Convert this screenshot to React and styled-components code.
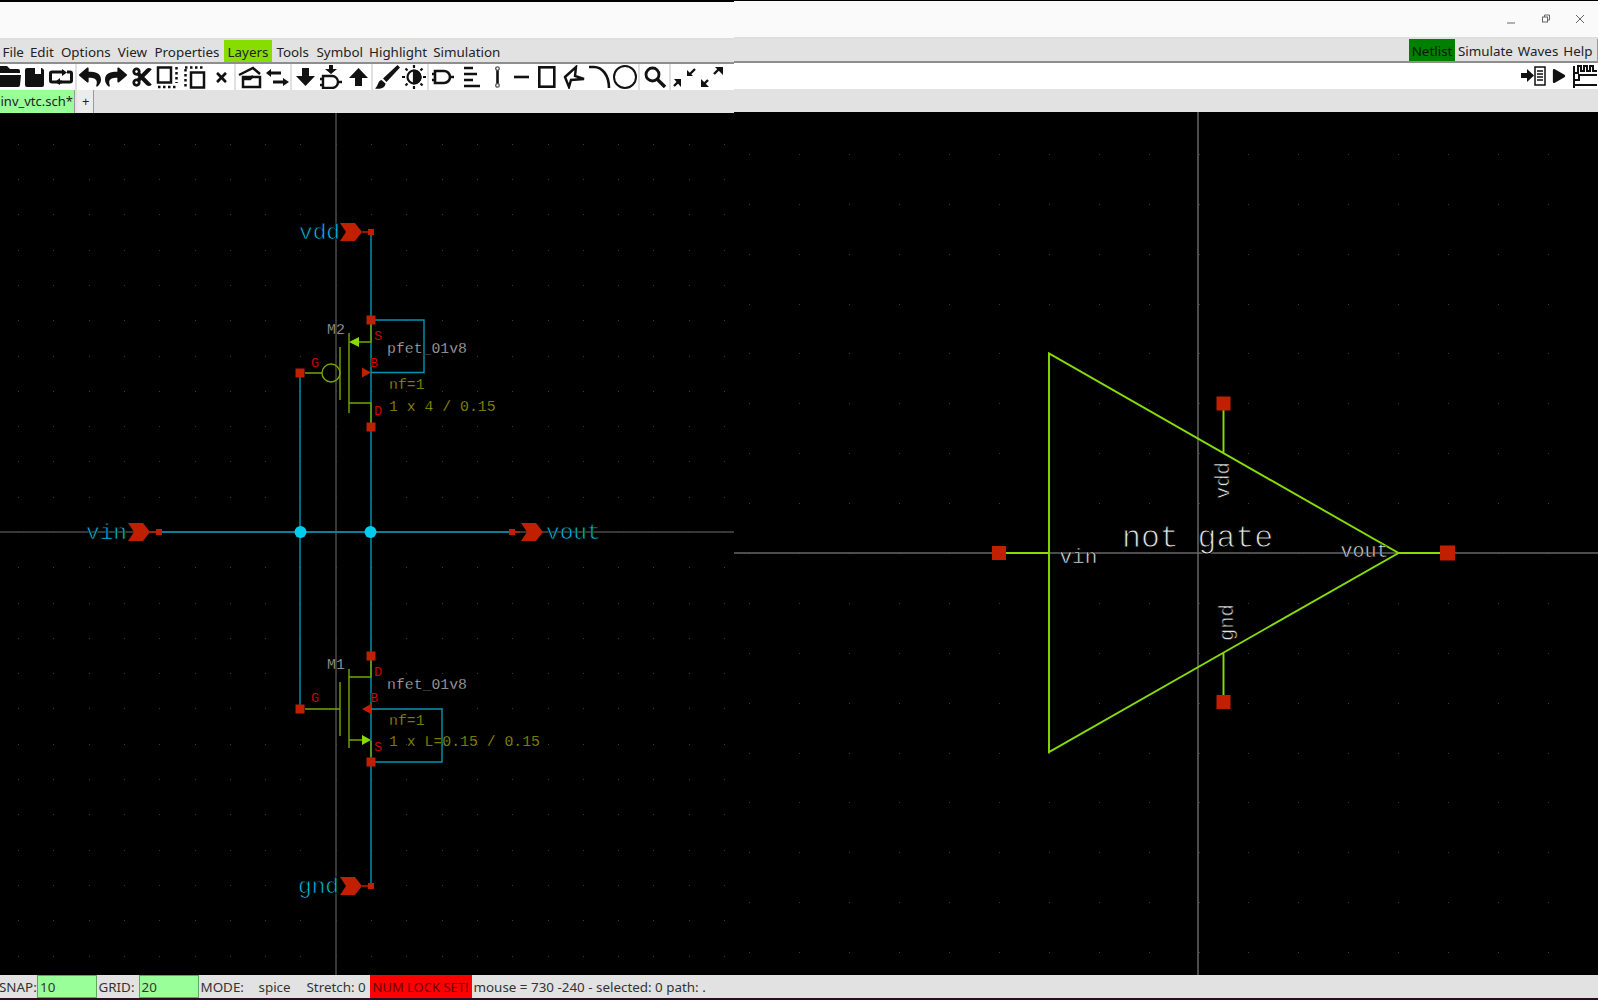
import React from 'react';
import styled, { createGlobalStyle } from 'styled-components';
import { FaReply, FaShare, FaCut, FaTimes, FaPlay } from 'react-icons/fa';

const Global = createGlobalStyle`
  html, body { margin: 0; padding: 0; background: #000; overflow: hidden; }
  #root { width: 1598px; height: 1000px; }
`;

const Screen = styled.div`
  width: 1598px; height: 1000px; display: flex; flex-direction: column;
  font-family: "Noto Sans", sans-serif; font-size: 13.4px; color: #222;
  border-bottom: 2px solid #2c0a22; box-sizing: border-box;
`;
const Panes = styled.div`display: flex; height: 975px;`;
const Pane = styled.section`
  width: ${p => p.$w}px; height: 975px; display: flex; flex-direction: column;
  border-top: ${p => p.$top}px solid #000; box-sizing: border-box; overflow: hidden;
`;
const TitleBar = styled.header`
  height: 36px; flex: none; background: #fafafa; border-bottom: 2px solid #dedede;
  display: flex; justify-content: flex-end; align-items: center; gap: 20px; padding-right: 11px;
`;
const WinButton = styled.svg`width: 14px; height: 14px; fill: none; stroke: #666; stroke-width: 1;`;
const MenuBar = styled.nav`
  height: 22px; flex: none; background: #e2e2e2; border-bottom: 2px solid #8e8e8e;
  display: flex; justify-content: ${p => p.$right ? 'flex-end' : 'flex-start'};
  padding-right: ${p => p.$right ? 2 : 0}px;
  border-right: ${p => p.$right ? '1px solid #9a9a9a' : '0'};
`;
const MenuItem = styled.span`
  display: flex; align-items: center; height: 22px; box-sizing: border-box; padding: 1px ${p => p.$pad ?? 3.5}px 0;
  background: ${p => p.$bg || 'transparent'}; color: ${p => p.$fg || '#222'}; white-space: nowrap;
`;
const ToolBar = styled.div`
  height: 26px; flex: none; background: #fff; display: flex; align-items: center;
  justify-content: ${p => p.$right ? 'flex-end' : 'flex-start'};
  overflow: hidden;
`;
const Tool = styled.span`
  width: ${p => p.$w}px; height: 26px; flex: none; display: flex; align-items: center; justify-content: center;
  margin-left: ${p => p.$ml || 0}px; color: #111;
  svg { display: block; flex: none; }
`;
const ToolSep = styled.span`width: 2px; height: 26px; flex: none; background: #e0e0e0;`;
const TabBar = styled.div`height: 23px; flex: none; background: #e2e2e2; display: flex;`;
const Tab = styled.span`
  height: 23px; box-sizing: border-box; display: flex; align-items: center; white-space: nowrap; overflow: hidden;
  width: ${p => p.$w}px; background: ${p => p.$active ? '#99ff99' : '#ececec'};
  border-right: 1px solid #9a9a9a; padding: 0 0 2px ${p => p.$pl}px; margin-left: ${p => p.$ml || 0}px;
  font-size: 13px;
`;
const Canvas = styled.svg`display: block; flex: none; background: #000;`;
const StatusBar = styled.footer`
  height: 23px; flex: none; background: #e2e2e2; display: flex; align-items: stretch; overflow: hidden; color: #333;
`;
const StatusText = styled.span`display: flex; align-items: center; white-space: nowrap; width: ${p => p.$w ? p.$w + 'px' : 'auto'}; margin-left: ${p => p.$ml || 0}px; flex: none;`;
const StatusInput = styled.span`
  width: 60px; flex: none; box-sizing: border-box; background: #99ff99; border: 1px solid #5aa85a;
  display: flex; align-items: center; padding-left: 2px;
`;
const NumLock = styled.span`
  width: 102px; flex: none; background: #ff0000; color: #6a0000; font-size: 13px; display: flex; align-items: center; justify-content: center; white-space: nowrap;
`;

const Label = styled.text`
  font-family: "Liberation Mono", monospace;
  font-size: ${p => p.$size}px;
  fill: ${p => p.$c};
  stroke: #000; stroke-width: ${p => p.$thin ?? 0.3}px; paint-order: fill stroke;
`;

const AXIS = '#4a4a4a', WIRE = '#0096b4', DIM = '#74a600', GREEN = '#88dd00', RED = '#c02000', DOT = '#3c3c3c', JUNC = '#00ccee', GRAY = '#bcbcbc', OLIVE = '#a0a000', PINT = '#dc0000', SYM = '#e4e4e4', NET = '#00c8f0';

const range = (start, end, step) => { const a = []; for (let v = start; v <= end; v += step) a.push(v); return a; };

const Grid = ({ x0, x1, y0, y1, ox, oy, step }) => {
  const xs = range(ox - Math.ceil((ox - x0) / step) * step, x1, step);
  const ys = range(oy - Math.ceil((oy - y0) / step) * step, y1, step);
  return <g fill={DOT}>{ys.flatMap(y => xs.map(x => <rect key={x + '_' + y} x={Math.round(x)} y={Math.round(y)} width="1" height="1" />))}</g>;
};

const Pin = ({ x, y, s = 9 }) => <rect x={x - s / 2} y={y - s / 2} width={s} height={s} fill={RED} />;
const Chevron = ({ x, y }) => <polygon points={`${x},${y - 9} ${x + 15},${y - 9} ${x + 22},${y} ${x + 15},${y + 9} ${x},${y + 9} ${x + 6},${y}`} fill={RED} />;

const Left = () => (
  <Canvas width="734" height="862" viewBox="0 113 734 862">
    <Grid x0={0} x1={734} y0={113} y1={975} ox={335.7} oy={532} step={35.3} />
    <g stroke={AXIS} strokeWidth="1.5">
      <line x1="336" y1="113" x2="336" y2="975" />
      <line x1="0" y1="532" x2="734" y2="532" />
    </g>
    <g fill="none" stroke={WIRE} strokeWidth="1.4">
      <path d="M371 232V426M371 426V886M300 373V709M159 532H512M371 320H424V372.5H371M371 709H442V762H371" />
    </g>
    <g fill="none" stroke={DIM} strokeWidth="1.4">
      <path d="M349 333V413M340 347V400M349 403H371V426M371 320V342H356M305 373H322M349 669V748M340 682V736M349 677H371V656M305 709H340M349 740H362M371 741V757" />
      <circle cx="331" cy="373" r="9" />
    </g>
    <polygon points="349,342 359,337 359,347" fill={GREEN} />
    <polygon points="371,740 362,735 362,745" fill={GREEN} />
    <polygon points="371,372.5 362,367.5 362,377.5" fill={RED} />
    <polygon points="362,709 371,704 371,714" fill={RED} />
    <g stroke={RED} strokeWidth="1.3"><path d="M362 232H371M362 886H371M150 532H159M512 532H520" /></g>
    <Pin x={371} y={232} s={6} /><Pin x={371} y={886} s={6} /><Pin x={159} y={532} s={6} /><Pin x={512} y={532} s={6} />
    <Pin x={371} y={320} /><Pin x={371} y={427} /><Pin x={300} y={373} /><Pin x={371} y={656} /><Pin x={300} y={709} /><Pin x={371} y={762} />
    <Chevron x={340} y={232} /><Chevron x={340} y={886} /><Chevron x={128} y={532} /><Chevron x={521} y={532} />
    <circle cx="300.5" cy="532" r="6" fill={JUNC} /><circle cx="370.5" cy="532" r="6" fill={JUNC} />

    <Label x="299" y="239" $size="22.8" $c={NET} $thin="0.75">vdd</Label>
    <Label x="298" y="893" $size="22.8" $c={NET} $thin="0.75">gnd</Label>
    <Label x="86" y="539" $size="22.8" $c={NET} $thin="0.75">vin</Label>
    <Label x="546" y="539" $size="22.8" $c={NET} $thin="0.75">vout</Label>

    <Label x="327" y="334" $size="14.8" $c={GRAY}>M2</Label>
    <Label x="387" y="353" $size="14.8" $c={GRAY}>pfet_01v8</Label>
    <Label x="389" y="389" $size="14.8" $c={OLIVE}>nf=1</Label>
    <Label x="389" y="410.5" $size="14.8" $c={OLIVE}>1 x 4 / 0.15</Label>
    <Label x="327" y="669" $size="14.8" $c={GRAY}>M1</Label>
    <Label x="387" y="689" $size="14.8" $c={GRAY}>nfet_01v8</Label>
    <Label x="389" y="725" $size="14.8" $c={OLIVE}>nf=1</Label>
    <Label x="389" y="746" $size="14.8" $c={OLIVE}>1 x L=0.15 / 0.15</Label>

    <Label x="374" y="340" $size="13.5" $c={PINT} $thin="0.1">S</Label>
    <Label x="311" y="367" $size="13.5" $c={PINT} $thin="0.1">G</Label>
    <Label x="370" y="367" $size="13.5" $c={PINT} $thin="0.1">B</Label>
    <Label x="374" y="415" $size="13.5" $c={PINT} $thin="0.1">D</Label>
    <Label x="374" y="676" $size="13.5" $c={PINT} $thin="0.1">D</Label>
    <Label x="311" y="702" $size="13.5" $c={PINT} $thin="0.1">G</Label>
    <Label x="370" y="702" $size="13.5" $c={PINT} $thin="0.1">B</Label>
    <Label x="374" y="751" $size="13.5" $c={PINT} $thin="0.1">S</Label>
  </Canvas>
);

const Right = () => (
  <Canvas width="864" height="863" viewBox="734 112 864 863">
    <Grid x0={734} x1={1598} y0={112} y1={975} ox={1198.5} oy={553} step={49.9} />
    <g stroke="#666" strokeWidth="1.5">
      <line x1="1198" y1="112" x2="1198" y2="975" />
      <line x1="734" y1="553" x2="1598" y2="553" />
    </g>
    <g fill="none" stroke={GREEN} strokeWidth="1.9">
      <path d="M1049 353.5V752L1398.5 553ZM999 553H1049M1398.5 553H1447M1223.5 403V453M1223.5 653V702" />
    </g>
    <Pin x={999} y={553} s={14} /><Pin x={1447.5} y={553} s={15} /><Pin x={1223.5} y={403.5} s={14} /><Pin x={1223.5} y={702} s={14} />
    <Label x="1059.5" y="562.5" $size="21" $c={SYM} $thin="0.6">vin</Label>
    <Label x="1122" y="546.5" $size="31.5" $c={SYM} $thin="1">not gate</Label>
    <Label x="1340.5" y="556.5" $size="20" $c={SYM} $thin="0.6">vout</Label>
    <Label transform="translate(1229 499) rotate(-90)" $size="20.5" $c={SYM} $thin="0.6">vdd</Label>
    <Label transform="translate(1233 641) rotate(-90)" $size="20.5" $c={SYM} $thin="0.6">gnd</Label>
  </Canvas>
);

const Ico = ({ w = 24, h = 24, sw = 2.5, children }) => (
  <svg width={w} height={h} viewBox={`0 0 ${w} ${h}`} fill="none" stroke="#111" strokeWidth={sw}>{children}</svg>
);
const Solid = ({ d }) => <path d={d} fill="#111" stroke="none" />;

const IconFolder = () => <Ico w={23} h={22}><Solid d="M0 2Q0 0 2 0H9L12 3H20Q22 3 22 5V7H0ZM0 9H23L22 19Q22 21 20 21H2Q0 21 0 19Z" /></Ico>;
const IconSave = () => <Ico w={19} h={19}><Solid d="M2 0H10V6H16V0H17L19 2V17Q19 19 17 19H2Q0 19 0 17V2Q0 0 2 0Z" /></Ico>;
const IconReload = () => (
  <Ico w={24} h={16} sw={3}>
    <path d="M15 3H3Q1.5 3 1.5 4.5V11.5Q1.5 13 3 13H13" />
    <path d="M18 3H21Q22.5 3 22.5 4.5V11.5Q22.5 13 21 13H9" />
    <Solid d="M13 0L18 3.5L13 7ZM11 9L6 13L11 16Z" />
  </Ico>
);
const IconCopy = () => <Ico h={24}><rect x="2" y="2.5" width="13" height="15" /><path d="M20.5 2V18M2 22H21" strokeDasharray="2.5 2.5" /></Ico>;
const IconMove = () => <Ico h={24}><rect x="8" y="7.5" width="13" height="15" /><path d="M2.5 4V22M2 2.5H21" strokeDasharray="2.5 2.5" /></Ico>;
const IconOpen = () => <Ico h={24}><path d="M1 10L15 3L22 9" /><rect x="5" y="12" width="17" height="10" /><path d="M5 14H12L15 11" /></Ico>;
const IconSwap = () => (
  <Ico h={22} w={24} sw={3}><path d="M6 7H16M8 16H19" /><Solid d="M1 7L6 3V11Z" /><Solid d="M24 16L18 12V20Z" /></Ico>
);
const IconDown = () => <Ico w={19} h={18}><Solid d="M6 0H13V8H19L9.5 18L0 8H6Z" /></Ico>;
const IconUp = () => <Ico w={19} h={18}><Solid d="M6 18H13V10H19L9.5 0L0 10H6Z" /></Ico>;
const Gate = ({ y = 0 }) => <path d={`M3 ${y + 1}H12A6 6 0 0 1 12 ${y + 13}H3ZM0 ${y + 4}H3M0 ${y + 10}H3M18 ${y + 7}H22`} />;
const IconDownGate = () => <Ico h={24} w={24} sw={2.4}><Solid d="M9 0H13V4H17L11 9L5 4H9Z" /><Gate y={10} /></Ico>;
const IconBrush = () => <Ico w={25} h={24}><Solid d="M22.5 0L25 2.5L11.5 17L8 13.5ZM6.5 15C2.5 16 4 20 0 23.5C5 24.5 10.5 23 10.5 18.5Z" /></Ico>;
const IconSun = () => (
  <Ico h={24} sw={2.2}>
    <circle cx="12" cy="12" r="6.5" /><path d="M12 5.5A6.5 6.5 0 0 1 12 18.5Z" fill="#111" />
    <path d="M12 0V3M12 21V24M0 12H3M21 12H24M3.5 3.5L5.5 5.5M18.5 18.5L20.5 20.5M3.5 20.5L5.5 18.5M18.5 5.5L20.5 3.5" />
  </Ico>
);
const IconGate = () => <Ico h={16} w={24} sw={2.6}><Gate y={1} /></Ico>;
const IconLines = () => <Ico w={17} h={22} sw={2.4}><path d="M1 2H10M1 8H14M1 14H10M1 20H17" /></Ico>;
const IconWire = () => <Ico w={9} h={22} sw={2}><path d="M4.5 4V18" strokeWidth="2.6" /><circle cx="4.5" cy="2.6" r="1.8" stroke="#555" strokeWidth="1.3" /><circle cx="4.5" cy="19.4" r="1.8" stroke="#555" strokeWidth="1.3" /></Ico>;
const IconLine = () => <Ico w={15} h={4} sw={2.6}><path d="M0 2H15" /></Ico>;
const IconRect = () => <Ico w={18} h={22} sw={2.6}><rect x="1.3" y="1.3" width="15" height="19.4" /></Ico>;
const IconPoly = () => <Ico w={22} h={24} sw={2.4}><path d="M2 12L13 2L12 11L21 14L8 15L6 22Z" /></Ico>;
const IconArc = () => <Ico w={22} h={24} sw={2.6}><path d="M0 2H5C13 2 20 10 20 23" /></Ico>;
const IconCircle = () => <Ico w={24} h={24} sw={2}><circle cx="12" cy="12" r="11" /></Ico>;
const IconSearch = () => <Ico w={22} h={22} sw={2.8}><circle cx="8.5" cy="8.5" r="6.5" /><path d="M13 13L21 21" strokeWidth="3.4" /></Ico>;
const IconShrink = () => (
  <Ico w={24} h={22} sw={2.4}>
    <path d="M22 3L16 9M1 20L6 15" />
    <Solid d="M14 4V10H20Z" /><Solid d="M1 13H8V21Z" />
  </Ico>
);
const IconExpand = () => (
  <Ico w={24} h={22} sw={2.4}>
    <path d="M14 8L19 3M2 20L8 14" />
    <Solid d="M15 1H23V9Z" /><Solid d="M1 13V21H9Z" />
  </Ico>
);
const IconNetlist = () => (
  <Ico w={25} h={20} sw={1.5}>
    <Solid d="M0 7H6V3L13 9.5L6 16V12H0Z" />
    <rect x="14" y="1" width="10" height="18" /><path d="M16 5H22M16 8H22M16 11H22M16 14H22" />
  </Ico>
);
const IconWave = () => (
  <Ico w={24} h={24} sw={2}>
    <path d="M1 2V24M1 9H5V2H8V7H11V2H14V7H17V2H20V7H24M1 16H6V11H24M1 21H24" />
  </Ico>
);

const leftMenu = [['File', 2.5], ['Edit'], ['Options'], ['View'], ['Properties', 4], ['Layers', 4], ['Tools', 4], ['Symbol', 3.5], ['Highlight', 2.5], ['Simulation']];

export default function App() {
  return (
    <Screen>
      <Global />
      <Panes>
        <Pane $w={734} $top={2}>
          <TitleBar />
          <MenuBar>
            {leftMenu.map(([m, pad]) => (
              <MenuItem key={m} $bg={m === 'Layers' ? '#88dd00' : undefined} $pad={pad}>{m}</MenuItem>
            ))}
          </MenuBar>
          <ToolBar>
            <Tool $w={25} $ml={-3}><IconFolder /></Tool>
            <Tool $w={24}><IconSave /></Tool>
            <Tool $w={29}><IconReload /></Tool>
            <ToolSep />
            <Tool $w={26}><FaReply size={22} /></Tool>
            <Tool $w={26}><FaShare size={22} /></Tool>
            <Tool $w={26}><FaCut size={22} /></Tool>
            <Tool $w={26}><IconCopy /></Tool>
            <Tool $w={27}><IconMove /></Tool>
            <Tool $w={26}><FaTimes size={15} /></Tool>
            <ToolSep />
            <Tool $w={27}><IconOpen /></Tool>
            <Tool $w={27}><IconSwap /></Tool>
            <ToolSep />
            <Tool $w={26}><IconDown /></Tool>
            <Tool $w={28}><IconDownGate /></Tool>
            <Tool $w={25}><IconUp /></Tool>
            <ToolSep />
            <Tool $w={28}><IconBrush /></Tool>
            <Tool $w={26}><IconSun /></Tool>
            <ToolSep />
            <Tool $w={29}><IconGate /></Tool>
            <Tool $w={27}><IconLines /></Tool>
            <Tool $w={24}><IconWire /></Tool>
            <Tool $w={25}><IconLine /></Tool>
            <Tool $w={26}><IconRect /></Tool>
            <Tool $w={27}><IconPoly /></Tool>
            <Tool $w={25}><IconArc /></Tool>
            <Tool $w={26}><IconCircle /></Tool>
            <ToolSep />
            <Tool $w={29}><IconSearch /></Tool>
            <ToolSep />
            <Tool $w={27}><IconShrink /></Tool>
            <Tool $w={28}><IconExpand /></Tool>
          </ToolBar>
          <TabBar>
            <Tab $w={75} $pl={0.5} $active>inv_vtc.sch*</Tab>
            <Tab $w={17} $pl={5} $ml={2}>+</Tab>
          </TabBar>
          <Left />
        </Pane>
        <Pane $w={864} $top={1}>
          <TitleBar>
            <WinButton viewBox="0 0 14 14"><path d="M2 11H10" /></WinButton>
            <WinButton viewBox="0 0 14 14"><rect x="3.5" y="5" width="5" height="5" /><path d="M5.5 5V3H10.5V8H8.5" /></WinButton>
            <WinButton viewBox="0 0 14 14"><path d="M3 3L11 11M11 3L3 11" /></WinButton>
          </TitleBar>
          <MenuBar $right>
            <MenuItem $bg="#008000" $fg="#001a00" $pad={3}>Netlist</MenuItem>
            <MenuItem $pad={2.5}>Simulate</MenuItem>
            <MenuItem $pad={2.5}>Waves</MenuItem>
            <MenuItem $pad={2.5}>Help</MenuItem>
          </MenuBar>
          <ToolBar $right>
            <Tool $w={26}><IconNetlist /></Tool>
            <Tool $w={26}><FaPlay size={14} /></Tool>
            <Tool $w={26}><IconWave /></Tool>
          </ToolBar>
          <TabBar />
          <Right />
        </Pane>
      </Panes>
      <StatusBar>
        <StatusText $w={38} $ml={-1}>SNAP:</StatusText>
        <StatusInput>10</StatusInput>
        <StatusText $w={40} $ml={1.5}>GRID:</StatusText>
        <StatusInput>20</StatusInput>
        <StatusText $w={58} $ml={2}>MODE:</StatusText>
        <StatusText $w={48}>spice</StatusText>
        <StatusText $w={63}>Stretch: 0</StatusText>
        <NumLock>NUM LOCK SET!</NumLock>
        <StatusText $ml={2}>mouse = 730 -240 - selected: 0 path: .</StatusText>
      </StatusBar>
    </Screen>
  );
}
